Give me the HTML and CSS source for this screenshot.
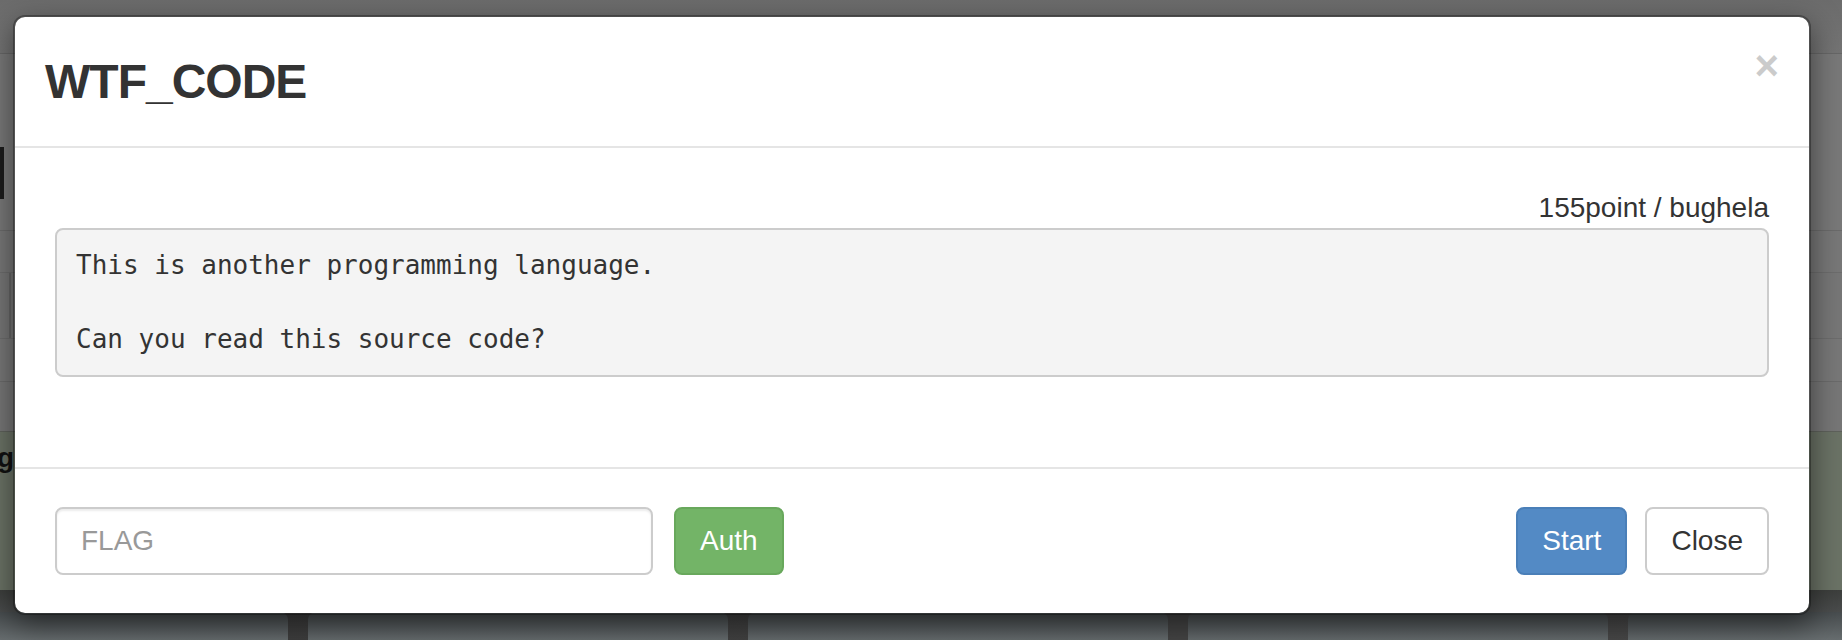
FILE: index.html
```html
<!DOCTYPE html>
<html>
<head>
<meta charset="utf-8">
<title>WTF_CODE</title>
<link rel="stylesheet" href="styles.css">
</head>
<body>
<div class="page">
  <div class="bg-band bg-top"></div>
  <div class="bg-band bg-head"><span class="bg-tick"></span></div>
  <div class="bg-band bg-row"></div>
  <div class="bg-band bg-row2"><span class="bg-box"></span></div>
  <div class="bg-band bg-row3"></div>
  <div class="bg-band bg-row4"></div>
  <div class="bg-band bg-green"><span class="bg-letter">g</span></div>
  <div class="bg-band bg-dark"></div>
  <div class="bg-cards">
    <div class="bg-card bg-card-a"></div>
    <div class="bg-card bg-card-b"></div>
    <div class="bg-card bg-card-b"></div>
    <div class="bg-card bg-card-b"></div>
    <div class="bg-card bg-card-c"></div>
  </div>
</div>

<div class="modal">
  <div class="modal-header">
    <button class="close" type="button">&times;</button>
    <h3 class="modal-title">WTF_CODE</h3>
  </div>
  <div class="modal-body">
    <div class="meta">155point / bughela</div>
<pre class="desc">This is another programming language.

Can you read this source code?</pre>
  </div>
  <div class="modal-footer">
    <div class="auth-form">
      <input class="flag-input" type="text" placeholder="FLAG">
      <button class="btn btn-success" type="button">Auth</button>
    </div>
    <div class="actions">
      <button class="btn btn-primary" type="button">Start</button>
      <button class="btn btn-default" type="button">Close</button>
    </div>
  </div>
</div>
</body>
</html>
```

FILE: styles.css
```css
* { box-sizing: border-box; }

html, body {
  margin: 0;
  padding: 0;
  width: 1842px;
  height: 640px;
  overflow: hidden;
  background: #777;
  font-family: "Liberation Sans", Arial, Helvetica, sans-serif;
}

/* ---------- dimmed page underneath ---------- */
.page {
  width: 1842px;
  height: 640px;
  display: flex;
  flex-direction: column;
  background: #797979;
}
.bg-band { position: relative; width: 100%; flex: none; }
.bg-top {
  height: 54px;
  background: linear-gradient(#6c6c6c, #747474);
  border-bottom: 1px solid #676767;
}
.bg-head { height: 177px; background: #797979; border-bottom: 1px solid #6b6b6b; }
.bg-tick {
  position: absolute;
  left: 0;
  top: 93px;
  width: 4px;
  height: 52px;
  background: #1c1c1c;
}
.bg-row { height: 42px; background: #787878; border-bottom: 1px solid #6d6d6d; }
.bg-row2 { height: 66px; background: #777; border-bottom: 1px solid #6d6d6d; }
.bg-box {
  position: absolute;
  left: 9px;
  top: 0;
  width: 2px;
  height: 100%;
  background: #666;
}
.bg-row3 { height: 43px; background: #787878; border-bottom: 1px solid #6b6b6b; }
.bg-row4 { height: 50px; background: #777; border-bottom: 1px solid #5f625c; }
.bg-green {
  height: 158px;
  background: #6b7366;
  overflow: hidden;
}
.bg-letter {
  position: absolute;
  left: -3px;
  top: 6px;
  font: bold 28px/40px "Liberation Sans", Arial, sans-serif;
  color: #111;
}
.bg-dark {
  height: 22px;
  background: linear-gradient(#3d3f3d, #4a4c4c);
}
.bg-cards {
  flex: 1;
  display: flex;
  gap: 20px;
  background: linear-gradient(90deg, #3c3c3c, #4a4a4a);
}
.bg-card {
  flex: none;
  height: 100%;
  background: linear-gradient(#474c4e, #676d6f);
  border-radius: 8px 8px 0 0;
}
.bg-card-a { width: 288px; border-radius: 0 8px 0 0; }
.bg-card-b { width: 420px; }
.bg-card-c { flex: 1; border-radius: 8px 0 0 0; }

/* ---------- modal ---------- */
.modal {
  position: absolute;
  left: 13px;
  top: 15px;
  width: 1798px;
  background: #fff;
  border: 2px solid rgba(0, 0, 0, 0.3);
  border-radius: 12px;
  box-shadow: 0 10px 30px rgba(0, 0, 0, 0.5);
  background-clip: padding-box;
  color: #333;
}

.modal-header {
  padding: 30px;
  border-bottom: 2px solid #e5e5e5;
}
.modal-title {
  margin: 0;
  font-size: 48px;
  line-height: 69px;
  font-weight: bold;
  color: #333;
  letter-spacing: -1px;
}
.close {
  float: right;
  margin-top: -2px;
  padding: 0;
  border: 0;
  background: transparent;
  font-family: "Liberation Sans", Arial, sans-serif;
  font-size: 42px;
  font-weight: bold;
  line-height: 1;
  color: #000;
  opacity: 0.2;
  cursor: pointer;
}

.modal-body {
  padding: 40px;
}
.meta {
  text-align: right;
  font-size: 28px;
  line-height: 40px;
  color: #333;
}
.desc {
  margin: 0 0 20px;
  padding: 17px 19px;
  font-family: "DejaVu Sans Mono", Menlo, monospace;
  font-size: 26px;
  line-height: 37px;
  color: #333;
  background: #f4f4f4;
  border: 2px solid #ccc;
  border-radius: 8px;
  white-space: pre;
}

.modal-footer {
  margin-top: 30px;
  padding: 38px 40px 38px;
  border-top: 2px solid #e5e5e5;
  display: flex;
  justify-content: space-between;
  align-items: center;
}
.auth-form {
  display: flex;
  align-items: center;
  gap: 21px;
}
.actions {
  display: flex;
  align-items: center;
  gap: 18px;
}
.flag-input {
  width: 598px;
  height: 68px;
  padding: 12px 24px;
  font-family: "Liberation Sans", Arial, sans-serif;
  font-size: 28px;
  color: #555;
  border: 2px solid #ccc;
  border-radius: 8px;
  box-shadow: inset 0 2px 2px rgba(0, 0, 0, 0.075);
  outline: none;
}
.flag-input::placeholder { color: #999; }

.btn {
  height: 68px;
  padding: 12px 24px;
  font-family: "Liberation Sans", Arial, sans-serif;
  font-size: 28px;
  line-height: 40px;
  border: 2px solid transparent;
  border-radius: 8px;
  cursor: pointer;
}
.btn-success { background: #73b467; border-color: #68a85c; color: #fff; }
.btn-primary { background: #538ac5; border-color: #4a7fb8; color: #fff; }
.btn-default { background: #fff; border-color: #ccc; color: #333; }
```
